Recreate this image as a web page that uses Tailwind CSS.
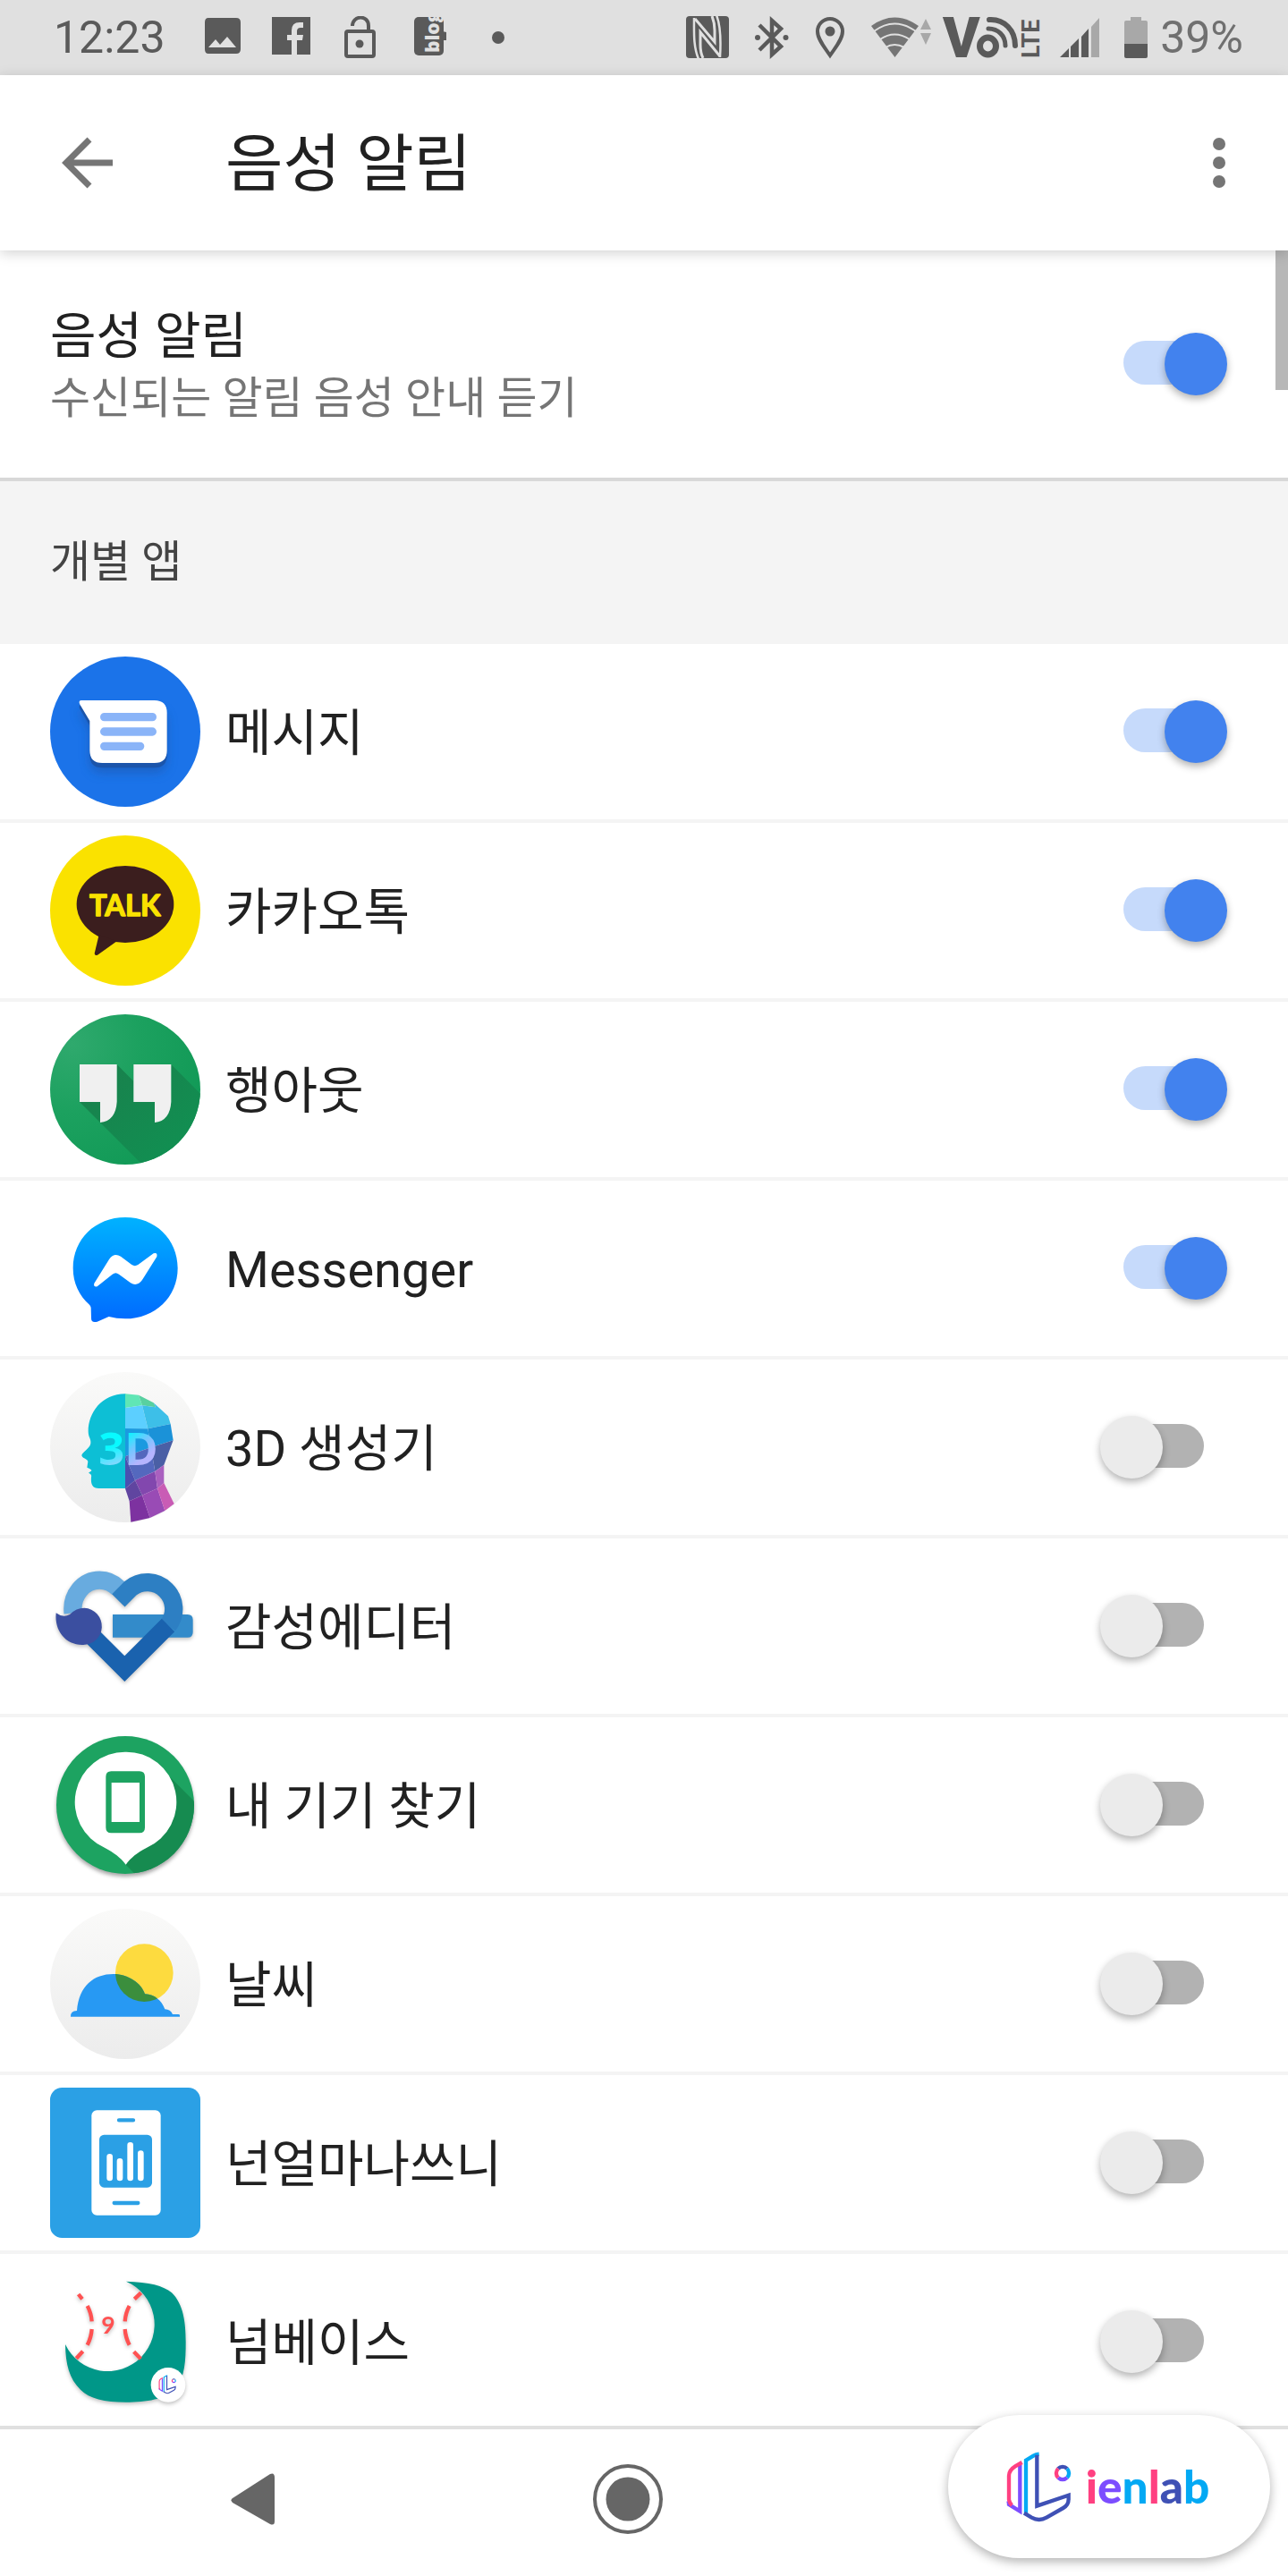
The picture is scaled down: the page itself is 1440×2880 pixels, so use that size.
<!DOCTYPE html>
<html lang="ko">
<head>
    <meta charset="UTF-8">
    <meta name="viewport" content="width=device-width, initial-scale=1.0">
    <title>음성 알림</title>
    <script src="https://cdn.jsdelivr.net/npm/@tailwindcss/browser@4"></script>
</head>
<body class="flex flex-col min-h-screen bg-white text-[#212121] font-[Roboto,'Noto_Sans_CJK_KR',sans-serif]">

    <!-- Status bar -->
    <div class="flex justify-between items-center h-[84px] pl-[60px] pr-[50px] bg-[#e0e0e0] text-[#5a5a5a]">
        <div class="flex items-center gap-[33px]">
            <span class="w-[134px] text-[50px] leading-[60px]">12:23</span>
            <svg class="w-11 h-12" viewBox="227 18 44 48" fill="currentColor">
                <path d="M233 20h31q5 0 5 5v30q0 5-5 5h-31q-4 0-4-5V25q0-5 4-5zM233 53h31L254 41l-8 9-5-6z" fill-rule="evenodd"/>
            </svg>
            <svg class="w-11 h-12" viewBox="304 18 44 48">
                <path d="M304 19h43v42h-43z" fill="currentColor"/>
                <path d="M326 61V45h-5v-6h5v-5q0-9 9-9h4v6h-3q-4 0-4 4v4h7l-1 6h-6v16z" fill="#e0e0e0"/>
            </svg>
            <svg class="w-11 h-12" viewBox="381 16 44 48" fill="none" stroke="currentColor" stroke-width="4">
                <rect x="387" y="33" width="31" height="28" rx="2"/>
                <path d="M394 27c0-12 18-13 18 0v5"/>
                <circle cx="402" cy="47" r="4.500" fill="currentColor" stroke="none"/>
            </svg>
            <svg class="w-11 h-12" viewBox="458 18 44 48">
                <clipPath id="blog"><path d="M458 19h44v44h-44z"/></clipPath>
                <rect x="463" y="19" width="33" height="43" rx="5" fill="currentColor"/>
                <path d="M490 34l9 2v9h-9z" fill="currentColor"/>
                <g clip-path="url(#blog)"><text x="-59" y="491" transform="rotate(-90)" font-family="Open Sans" font-weight="800" font-size="21" fill="#e0e0e0">blog</text></g>
            </svg>
            <svg class="w-11 h-12" viewBox="534 16 44 48" fill="currentColor"><circle cx="556" cy="40" r="7"/></svg>
        </div>
        <div class="flex items-center gap-3">
            <!-- NFC -->
            <svg class="w-14 h-12" viewBox="762 16 56 48">
                <rect x="766" y="16" width="48" height="47" rx="4" fill="currentColor"/>
                <path d="M775 18c0 16-1 32 5 46M800 15c5 12 5 30 4 47" fill="none" stroke="#e0e0e0" stroke-width="2.500"/>
                <path d="M776 19l22 26V32c0-8-1-11-3-16M804 61L782 34v14c0 8 1 11 3 15" fill="none" stroke="#e0e0e0" stroke-width="3"/>
            </svg>
            <!-- Bluetooth -->
            <svg class="w-[62px] h-12" viewBox="830 16 62 48" fill="none" stroke="currentColor" stroke-width="4.500">
                <path d="M848 26l24 24-10 9V21l10 9-24 24"/>
                <g fill="currentColor" stroke="none"><circle cx="846" cy="40" r="3"/><circle cx="877.500" cy="40" r="3"/></g>
            </svg>
            <!-- Location -->
            <svg class="w-14 h-12" viewBox="904 16 56 48">
                <path d="M927 60c-6-9-14-18-14-27a14 14 0 0 1 28 0c0 9-8 18-14 27z" fill="none" stroke="currentColor" stroke-width="4"/>
                <circle cx="927" cy="33" r="5.500" fill="currentColor"/>
            </svg>
            <!-- Wi-Fi -->
            <svg class="w-[69px] h-12" viewBox="972 16 69 48">
                <path d="M973 27Q999 8 1026 27L999.500 62z" fill="#757575"/>
                <path d="M976 33Q999 16 1023 33M983 42Q999 31 1016 42M989 51Q999 45 1010 51" fill="none" stroke="#e0e0e0" stroke-width="2"/>
                <path d="M1028 31l6-12 6 12zM1028 35h12l-6 13z" fill="#a8a8a8"/>
            </svg>
            <!-- VoLTE -->
            <svg class="w-[111px] h-12 overflow-visible" viewBox="1053 16 111 48" fill="currentColor">
                <text x="1053" y="62" font-family="Roboto" font-weight="900" font-size="63">V</text>
                <g fill="none" stroke="currentColor" stroke-linecap="round">
                    <ellipse cx="1103.500" cy="49.500" rx="9" ry="9.500" stroke-width="7"/>
                    <path d="M1105 20c17-1 29 12 29 29" stroke-width="6"/><path d="M1104 30c11 0 19 8 19 19" stroke-width="5"/>
                </g>
                <text x="-63" y="1161" transform="rotate(-90)" font-family="Roboto" font-weight="700" font-size="27">LTE</text>
            </svg>
            <!-- Signal -->
            <svg class="w-[62px] h-12" viewBox="1176 16 62 48">
                <path d="M1219 28l9-10v44h-9z" fill="#a8a8a8"/>
                <path d="M1184 62l10-10v10zM1196 50l9-9v21h-9zM1208 39l8-9v32h-8z" fill="currentColor"/>
            </svg>
            <!-- Battery -->
            <svg class="w-[34px] h-12" viewBox="1250 16 34 48">
                <path d="M1263 17h12v4h5q2 0 2 2v24h-26V23q0-2 2-2h5z" fill="#a8a8a8"/>
                <path d="M1256 47h26v14q0 2-2 2h-22q-2 0-2-2z" fill="currentColor"/>
            </svg>
            <span class="text-[50px] leading-[60px] text-[#707070]">39%</span>
        </div>
    </div>

    <!-- App bar -->
    <header class="relative z-10 flex items-center h-[196px] px-14 bg-white text-[#757575] shadow-[0_3px_14px_rgba(0,0,0,0.18)]">
        <button type="button" aria-label="뒤로" class="size-[84px]">
            <svg class="size-[84px]" viewBox="0 0 84 84" fill="none" stroke="currentColor" stroke-width="7"><path d="M70 42H20M44 16L18 42l26 26"/></svg>
        </button>
        <h1 class="grow ml-28 pt-1 text-[70px] leading-[84px] text-[#212121]">음성 알림</h1>
        <button type="button" aria-label="옵션 더보기" class="w-[42px] h-[84px]">
            <svg class="w-[42px] h-[84px]" viewBox="0 0 42 84" fill="currentColor"><circle cx="21" cy="21" r="7"/><circle cx="21" cy="42" r="7"/><circle cx="21" cy="63" r="7"/></svg>
        </button>
    </header>

    <main class="relative grow bg-white">
        <div class="absolute top-0 right-0 w-[14px] h-[156px] bg-[#b7b7b7]"></div>

        <label class="flex justify-between items-center h-[258px] pl-14 pr-[68px] border-b-4 border-[#d8d8d8]">
            <span class="pt-2">
                <span class="block text-[56px] leading-[70px]">음성 알림</span>
                <span class="block text-[49px] leading-[70px] text-[#757575]">수신되는 알림 음성 안내 듣기</span>
            </span>
            <input type="checkbox" role="switch" checked class="relative shrink-0 w-[142px] h-[70px] appearance-none before:absolute before:inset-x-[26px] before:top-[9px] before:h-[49px] before:rounded-full before:bg-[#b2b2b2] checked:before:bg-[#c6dafb] after:absolute after:top-0 after:left-0 after:size-[70px] after:rounded-full after:bg-[#ebebeb] after:shadow-[0_4px_8px_rgba(0,0,0,0.3)] checked:after:left-[72px] checked:after:bg-[#4282ee]">
        </label>

        <h2 class="flex items-center h-[182px] px-14 bg-[#f4f4f4] text-[49px] leading-[60px] text-[#444444]">개별 앱</h2>

        <ul class="divide-y-4 divide-[#f4f4f4]">
            <li>
                <label class="flex items-center gap-7 py-[14px] pl-14 pr-[68px]">
                    <svg class="size-[168px]" viewBox="48 42 504 504">
                        <defs>
                            <filter id="msgBlur" x="-30%" y="-30%" width="160%" height="160%"><feGaussianBlur stdDeviation="18"/></filter>
                            <path id="msgBubble" d="M153 189H398Q440 189 440 231V357Q440 399 398 399H223Q181 399 181 357V258L147 201Q143 189 153 189z"/>
                        </defs>
                        <circle cx="300" cy="294" r="252" fill="#1b73e9"/>
                        <use href="#msgBubble" y="32" fill="#1a56ab" opacity=".6" filter="url(#msgBlur)"/>
                        <use href="#msgBubble" y="16" fill="#1b55ab"/>
                        <use href="#msgBubble" fill="#fff"/>
                        <path d="M230 245H391M230 294H391M230 343H350" stroke="#8ab4f8" stroke-width="28" stroke-linecap="round"/>
                    </svg>
                    <span class="grow pt-1 text-[56px] leading-[70px]">메시지</span>
                    <input type="checkbox" role="switch" checked class="relative shrink-0 w-[142px] h-[70px] appearance-none before:absolute before:inset-x-[26px] before:top-[9px] before:h-[49px] before:rounded-full before:bg-[#b2b2b2] checked:before:bg-[#c6dafb] after:absolute after:top-0 after:left-0 after:size-[70px] after:rounded-full after:bg-[#ebebeb] after:shadow-[0_4px_8px_rgba(0,0,0,0.3)] checked:after:left-[72px] checked:after:bg-[#4282ee]">
                </label>
            </li>
            <li>
                <label class="flex items-center gap-7 py-[14px] pl-14 pr-[68px]">
                    <svg class="size-[168px]" viewBox="48 642 504 504">
                        <circle cx="300" cy="894" r="252" fill="#fae200"/>
                        <g fill="#3b1e1e">
                            <ellipse cx="300" cy="873" rx="163" ry="129"/>
                            <path d="M212 975L197 1038Q198 1047 207 1043L272 997z"/>
                        </g>
                        <text x="299" y="911" text-anchor="middle" font-family="Lato" font-weight="700" font-size="98" fill="#fae200" stroke="#fae200" stroke-width="4" stroke-linejoin="round">TALK</text>
                    </svg>
                    <span class="grow pt-1 text-[56px] leading-[70px]">카카오톡</span>
                    <input type="checkbox" role="switch" checked class="relative shrink-0 w-[142px] h-[70px] appearance-none before:absolute before:inset-x-[26px] before:top-[9px] before:h-[49px] before:rounded-full before:bg-[#b2b2b2] checked:before:bg-[#c6dafb] after:absolute after:top-0 after:left-0 after:size-[70px] after:rounded-full after:bg-[#ebebeb] after:shadow-[0_4px_8px_rgba(0,0,0,0.3)] checked:after:left-[72px] checked:after:bg-[#4282ee]">
                </label>
            </li>
            <li>
                <label class="flex items-center gap-7 py-[14px] pl-14 pr-[68px]">
                    <svg class="size-[168px]" viewBox="48 42 504 504">
                        <defs>
                            <radialGradient id="hangBg" cx=".15" cy=".2" r=".9"><stop offset="0" stop-color="#2fa96d"/><stop offset=".5" stop-color="#1ca15f"/><stop offset="1" stop-color="#129a57"/></radialGradient>
                            <clipPath id="hangClip"><circle cx="300" cy="294" r="252"/></clipPath>
                            <linearGradient id="hangShade" x1="0" y1="0" x2="1" y2="1"><stop offset="0" stop-color="#1a7f4c"/><stop offset="1" stop-color="#0f9353"/></linearGradient>
                        </defs>
                        <circle cx="300" cy="294" r="252" fill="url(#hangBg)"/>
                        <path d="M147 336L370 559H570V326L454 210V336H328V266L272 210V336z" fill="url(#hangShade)" clip-path="url(#hangClip)"/>
                        <path d="M147 210H272V336Q268 400 216 405V336H147zM328 210H454V336Q450 400 399 405V336H328z" fill="#f0f0f0"/>
                    </svg>
                    <span class="grow pt-1 text-[56px] leading-[70px]">행아웃</span>
                    <input type="checkbox" role="switch" checked class="relative shrink-0 w-[142px] h-[70px] appearance-none before:absolute before:inset-x-[26px] before:top-[9px] before:h-[49px] before:rounded-full before:bg-[#b2b2b2] checked:before:bg-[#c6dafb] after:absolute after:top-0 after:left-0 after:size-[70px] after:rounded-full after:bg-[#ebebeb] after:shadow-[0_4px_8px_rgba(0,0,0,0.3)] checked:after:left-[72px] checked:after:bg-[#4282ee]">
                </label>
            </li>
            <li>
                <label class="flex items-center gap-7 py-[14px] pl-14 pr-[68px]">
                    <svg class="size-[168px]" viewBox="48 642 504 504">
                        <linearGradient id="fbm" gradientUnits="userSpaceOnUse" x1="300" y1="723" x2="300" y2="1074"><stop offset="0" stop-color="#00b2ff"/><stop offset="1" stop-color="#006aff"/></linearGradient>
                        <path d="M300 723C400 723 476 796 476 893S400 1063 300 1063Q270 1063 245 1056L206 1073Q186 1078 186 1062L185 1026Q184 1020 180 1016C146 985 125 944 125 893C125 796 200 723 300 723z" fill="url(#fbm)"/>
                        <path d="M196 944L246 864Q262 840 285 854L322 882Q332 889 343 882L395 844Q409 839 406 855L357 933Q340 956 318 943L279 914Q268 905 257 914L206 955Q192 957 196 944z" fill="#fff"/>
                    </svg>
                    <span class="grow pt-1 text-[56px] leading-[70px]">Messenger</span>
                    <input type="checkbox" role="switch" checked class="relative shrink-0 w-[142px] h-[70px] appearance-none before:absolute before:inset-x-[26px] before:top-[9px] before:h-[49px] before:rounded-full before:bg-[#b2b2b2] checked:before:bg-[#c6dafb] after:absolute after:top-0 after:left-0 after:size-[70px] after:rounded-full after:bg-[#ebebeb] after:shadow-[0_4px_8px_rgba(0,0,0,0.3)] checked:after:left-[72px] checked:after:bg-[#4282ee]">
                </label>
            </li>
            <li>
                <label class="flex items-center gap-7 py-[14px] pl-14 pr-[68px]">
                    <svg class="size-[168px]" viewBox="48 42 504 504">
                        <defs>
                            <linearGradient id="paleBg" x1="0" y1="0" x2="0" y2="1"><stop offset="0" stop-color="#fafaf9"/><stop offset="1" stop-color="#ececec"/></linearGradient>
                            <linearGradient id="three" gradientUnits="userSpaceOnUse" x1="240" y1="250" x2="270" y2="356"><stop offset=".4" stop-color="#08faff"/><stop offset="1" stop-color="#8fd4ff"/></linearGradient>
                            <linearGradient id="dee" gradientUnits="userSpaceOnUse" x1="305" y1="250" x2="365" y2="330"><stop offset="0" stop-color="#08f6ff"/><stop offset=".5" stop-color="#6fc8ff"/><stop offset="1" stop-color="#b5b4ff"/></linearGradient>
                        </defs>
                        <circle cx="300" cy="294" r="252" fill="url(#paleBg)"/>
                        <path d="M300 115C220 115 176 180 176 240C176 262 186 265 184 282C180 300 155 310 154 322C156 332 172 332 175 342L172 362Q188 368 187 373L177 380Q189 385 186 394C184 420 190 432 212 432H301V115z" fill="#0dbfd5"/>
                        <path fill="#60e6b5" d="M300 115L345 119L357 154L300 162z"/>
                        <path fill="#58d0a0" d="M345 119L395 145L402 160L357 154z"/>
                        <path fill="#5ccfff" d="M300 162L357 154L376 232L300 231z"/>
                        <path fill="#3dbfe8" d="M357 154L402 160L395 145L444 190L452 216L376 232z"/>
                        <path fill="#1b9ae0" d="M300 231L376 232L386 295L300 325z"/>
                        <path fill="#1b92d8" d="M376 232L452 216L461 271L386 295z"/>
                        <path fill="#4a5fa5" d="M386 295L461 271L430 353L400 375z"/>
                        <path fill="#5468be" d="M300 325L386 295L400 375L333 405L312 353z"/>
                        <path fill="#4a50b0" d="M300 325L312 353L333 405L300 433z"/>
                        <path fill="#8247ae" d="M333 405L400 375L408 432L357 455z"/>
                        <path fill="#a960bf" d="M400 375L430 353L430 414L408 432z"/>
                        <path fill="#6045a0" d="M300 433L333 405L357 455L314 475z"/>
                        <path fill="#7d32a0" d="M314 475L357 455L383 531L319 545z"/>
                        <path fill="#994bb5" d="M357 455L408 432L433 507L383 531z"/>
                        <path fill="#c95cb5" d="M408 432L430 414L464 484L433 507z"/>
                        <text x="211" y="354" font-family="Open Sans" font-weight="700" font-size="152"><tspan fill="url(#three)">3</tspan><tspan fill="url(#dee)">D</tspan></text>
                    </svg>
                    <span class="grow pt-1 text-[56px] leading-[70px]">3D 생성기</span>
                    <input type="checkbox" role="switch" class="relative shrink-0 w-[142px] h-[70px] appearance-none before:absolute before:inset-x-[26px] before:top-[9px] before:h-[49px] before:rounded-full before:bg-[#b2b2b2] checked:before:bg-[#c6dafb] after:absolute after:top-0 after:left-0 after:size-[70px] after:rounded-full after:bg-[#ebebeb] after:shadow-[0_4px_8px_rgba(0,0,0,0.3)] checked:after:left-[72px] checked:after:bg-[#4282ee]">
                </label>
            </li>
            <li>
                <label class="flex items-center gap-7 py-[14px] pl-14 pr-[68px]">
                    <svg class="size-[168px] drop-shadow-[0_2px_2px_rgba(0,0,0,0.25)]" viewBox="48 642 504 504" fill="none" stroke-width="61">
                        <path d="M258 855H509Q527 855 527 873V914Q527 932 509 932H258z" fill="#338bca"/>
                        <path d="M125 850C118 790 160 740 214 740Q250 740 277 767" stroke="#68abdf"/>
                        <path d="M277 808L318 767A89 89 0 0 1 444 891" stroke="#2d7fc3"/>
                        <path d="M444 891L298 1037L180 919" stroke="#1a62ae"/>
                        <path d="M68 850Q92 868 114 855Q135 833 163 833A62 62 0 0 1 156 957C100 957 62 910 68 850z" fill="#3b4fa0"/>
                    </svg>
                    <span class="grow pt-1 text-[56px] leading-[70px]">감성에디터</span>
                    <input type="checkbox" role="switch" class="relative shrink-0 w-[142px] h-[70px] appearance-none before:absolute before:inset-x-[26px] before:top-[9px] before:h-[49px] before:rounded-full before:bg-[#b2b2b2] checked:before:bg-[#c6dafb] after:absolute after:top-0 after:left-0 after:size-[70px] after:rounded-full after:bg-[#ebebeb] after:shadow-[0_4px_8px_rgba(0,0,0,0.3)] checked:after:left-[72px] checked:after:bg-[#4282ee]">
                </label>
            </li>
            <li>
                <label class="flex items-center gap-7 py-[14px] pl-14 pr-[68px]">
                    <svg class="size-[168px] drop-shadow-[0_3px_2px_rgba(0,0,0,0.35)]" viewBox="48 42 504 504">
                        <clipPath id="findClip"><circle cx="300" cy="294" r="231"/></clipPath>
                        <circle cx="300" cy="294" r="231" fill="#1da361"/>
                        <path d="M445 195L560 310V560H366L302 494z" fill="#168b50" clip-path="url(#findClip)"/>
                        <path d="M301 116A168 168 0 0 1 371 438C340 454 320 470 302 494C284 470 262 454 232 438A168 168 0 0 1 301 116z" fill="#fff"/>
                        <path d="M253 181h95q18 0 18 18v171q0 18-18 18h-95q-18 0-18-18V199q0-18 18-18zM254 219v132h94V219z" fill="#1da361" fill-rule="evenodd"/>
                    </svg>
                    <span class="grow pt-1 text-[56px] leading-[70px]">내 기기 찾기</span>
                    <input type="checkbox" role="switch" class="relative shrink-0 w-[142px] h-[70px] appearance-none before:absolute before:inset-x-[26px] before:top-[9px] before:h-[49px] before:rounded-full before:bg-[#b2b2b2] checked:before:bg-[#c6dafb] after:absolute after:top-0 after:left-0 after:size-[70px] after:rounded-full after:bg-[#ebebeb] after:shadow-[0_4px_8px_rgba(0,0,0,0.3)] checked:after:left-[72px] checked:after:bg-[#4282ee]">
                </label>
            </li>
            <li>
                <label class="flex items-center gap-7 py-[14px] pl-14 pr-[68px]">
                    <svg class="size-[168px]" viewBox="48 642 504 504">
                        <defs>
                            <path id="cloud" d="M117 1004Q116 985 138 984C145 900 195 861 260 861C310 861 355 892 366 928C400 930 422 950 433 979Q452 980 459 996H478Q483 996 483 1000V1004z"/>
                            <clipPath id="cloudClip"><use href="#cloud"/></clipPath>
                        </defs>
                        <circle cx="300" cy="894" r="252" fill="url(#paleBg)"/>
                        <circle cx="364" cy="857" r="97" fill="#fddb3f"/>
                        <use href="#cloud" fill="#2799f3"/>
                        <circle cx="364" cy="857" r="97" fill="#3b8e3d" clip-path="url(#cloudClip)"/>
                    </svg>
                    <span class="grow pt-1 text-[56px] leading-[70px]">날씨</span>
                    <input type="checkbox" role="switch" class="relative shrink-0 w-[142px] h-[70px] appearance-none before:absolute before:inset-x-[26px] before:top-[9px] before:h-[49px] before:rounded-full before:bg-[#b2b2b2] checked:before:bg-[#c6dafb] after:absolute after:top-0 after:left-0 after:size-[70px] after:rounded-full after:bg-[#ebebeb] after:shadow-[0_4px_8px_rgba(0,0,0,0.3)] checked:after:left-[72px] checked:after:bg-[#4282ee]">
                </label>
            </li>
            <li>
                <label class="flex items-center gap-7 py-[14px] pl-14 pr-[68px]">
                    <svg class="size-[168px]" viewBox="48 42 504 504" stroke-linecap="round">
                        <rect x="48" y="42" width="504" height="504" rx="40" fill="#2ba0e5"/>
                        <rect x="187" y="118" width="232" height="352" rx="18" fill="#fff"/>
                        <rect x="213" y="200" width="177" height="177" rx="16" fill="#2ba0e5"/>
                        <path d="M279 151H327M263 429H343" stroke="#2ba0e5" stroke-width="13"/>
                        <path d="M248 274V345M282 289V345M317 235V345M352 263V345" stroke="#fff" stroke-width="20"/>
                    </svg>
                    <span class="grow pt-1 text-[56px] leading-[70px]">넌얼마나쓰니</span>
                    <input type="checkbox" role="switch" class="relative shrink-0 w-[142px] h-[70px] appearance-none before:absolute before:inset-x-[26px] before:top-[9px] before:h-[49px] before:rounded-full before:bg-[#b2b2b2] checked:before:bg-[#c6dafb] after:absolute after:top-0 after:left-0 after:size-[70px] after:rounded-full after:bg-[#ebebeb] after:shadow-[0_4px_8px_rgba(0,0,0,0.3)] checked:after:left-[72px] checked:after:bg-[#4282ee]">
                </label>
            </li>
            <li>
                <label class="flex items-center gap-7 pt-[14px] pb-[10px] pl-14 pr-[68px]">
                    <svg class="size-[168px] drop-shadow-[0_2px_2px_rgba(0,0,0,0.25)]" viewBox="48 642 504 504">
                        <path d="M303 692C380 694 428 706 456 730C495 768 503 830 503 894C503 960 500 1010 470 1050C435 1088 370 1097 303 1097C230 1097 180 1085 150 1055C112 1018 100 970 99 903A157 157 0 1 0 303 692z" fill="#009788"/>
                        <path d="M143 735L156 751M173 774Q186 798 188 826M188 852Q186 880 173 905M158 926L136 950M353 730L331 751M314 774Q301 798 299 826M299 852Q301 880 314 905M329 928L352 952" fill="none" stroke="#ff5252" stroke-width="13"/>
                        <text x="243" y="867" text-anchor="middle" font-family="Lato" font-weight="700" font-size="80" fill="#ff5252">9</text>
                        <circle cx="444" cy="1039" r="58" fill="#fff"/>
                        <use href="#ienlabMark" transform="translate(343 940) scale(.27)"/>
                    </svg>
                    <span class="grow pt-1 text-[56px] leading-[70px]">넘베이스</span>
                    <input type="checkbox" role="switch" class="relative shrink-0 w-[142px] h-[70px] appearance-none before:absolute before:inset-x-[26px] before:top-[9px] before:h-[49px] before:rounded-full before:bg-[#b2b2b2] checked:before:bg-[#c6dafb] after:absolute after:top-0 after:left-0 after:size-[70px] after:rounded-full after:bg-[#ebebeb] after:shadow-[0_4px_8px_rgba(0,0,0,0.3)] checked:after:left-[72px] checked:after:bg-[#4282ee]">
                </label>
            </li>
        </ul>
    </main>

    <!-- Navigation bar -->
    <nav class="relative grid grid-cols-3 items-center justify-items-center h-[168px] pl-[73px] pr-[110px] border-t-4 border-[#e0e0e0] bg-white text-[#666666]">
        <button type="button" aria-label="뒤로">
            <svg class="size-20" viewBox="0 0 80 80" fill="currentColor"><path d="M17 35L59 8Q64 6 64 12V61Q64 66 59 64L17 40Q14 37 17 35z"/></svg>
        </button>
        <button type="button" aria-label="홈">
            <svg class="size-20 overflow-visible" viewBox="0 0 80 80"><circle cx="40" cy="36" r="37" fill="none" stroke="currentColor" stroke-width="4"/><circle cx="40" cy="36" r="24.500" fill="currentColor"/></svg>
        </button>
        <!-- Floating ienlab badge -->
        <div class="absolute right-5 bottom-5 flex items-center justify-center w-[360px] h-40 rounded-full bg-white shadow-[0_4px_12px_rgba(0,0,0,0.3)]">
            <svg class="w-[234px] h-20 overflow-visible" viewBox="250 240 700 240">
                <g id="ienlabMark" fill="none" stroke-width="13">
                    <path d="M301 287V443L264 420Q264 414 262 408" stroke="#7c4dff"/>
                    <path d="M308 279L285 292Q264 305 264 324V404Q266 416 274 423" stroke="#ff4081"/>
                    <path d="M321 452V272L346 257Q354 252 365 251" stroke="#03a9f4"/>
                    <path d="M358 254V425L464 389V402Q464 422 446 432L390 464Q365 478 340 464L315 449" stroke="#3f51b5"/>
                    <path d="M429 300A21 21 0 0 1 459 300" stroke="#3f51b5"/>
                    <path d="M459 300A21 21 0 0 1 459 330" stroke="#03a9f4"/>
                    <path d="M459 330A21 21 0 0 1 429 330" stroke="#7c4dff"/>
                    <path d="M429 330A21 21 0 0 1 429 300" stroke="#ff4081"/>
                </g>
                <text x="521" y="418" font-family="Lato" font-weight="900" font-size="154"><tspan fill="#ff4081">i</tspan><tspan fill="#7c4dff">e</tspan><tspan fill="#03a9f4">n</tspan><tspan fill="#ff4081">l</tspan><tspan fill="#3f51b5">a</tspan><tspan fill="#03a9f4">b</tspan></text>
            </svg>
        </div>
    </nav>
</body>
</html>
